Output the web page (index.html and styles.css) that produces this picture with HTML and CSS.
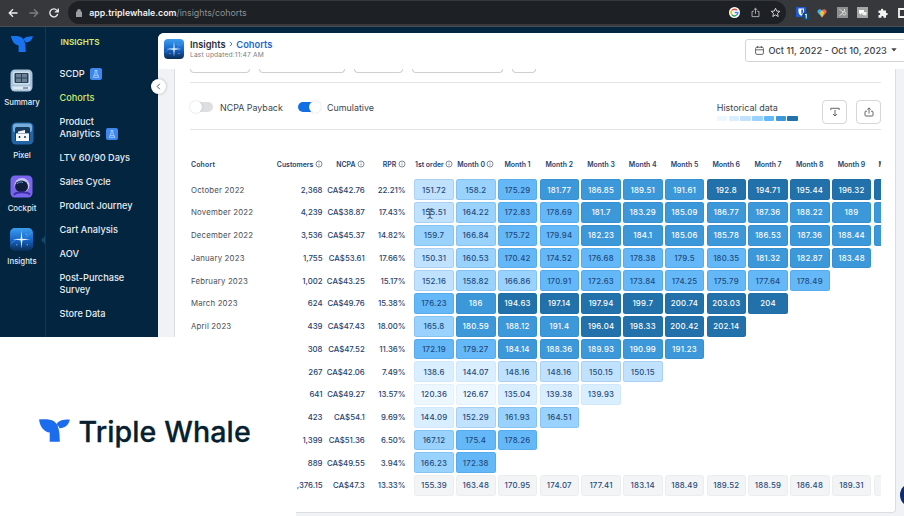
FILE: index.html
```html
<!DOCTYPE html>
<html lang="en">
<head>
    <meta charset="UTF-8">
    <meta name="viewport" content="width=device-width, initial-scale=1.0">
    <title>Cohorts - Triple Whale</title>
    <link rel="stylesheet" href="styles.css">
</head>
<body>
    <!-- shared symbols -->
    <svg class="symbols">
        <symbol id="whale" viewBox="0 0 31 23">
            <path d="M0 .4C6 0 11.500 0 15 2.200C19.500 5.500 20.800 12 20.800 22.700H10.700V13.500C5 13 1 7.500 0 .4Z"/>
            <path d="M17.200 5.600C19.500 1.300 24 .4 30.800 .5C30 5.500 26 9.300 20.600 9.200C19.800 7.500 18.800 6.500 17.200 5.600Z"/>
        </symbol>
        <symbol id="flask" viewBox="0 0 12 12">
            <rect width="12" height="12" rx="2" fill="#3f86ee"/>
            <path d="M4.700 2.500H7.300M5.200 2.500V5L3.200 9.300H8.800L6.800 5V2.500M4.300 7.300H7.700" fill="none" stroke="#b9dcff" stroke-width=".8"/>
        </symbol>
        <symbol id="info" viewBox="0 0 8 8">
            <circle cx="4" cy="4" r="3" fill="none" stroke="#4d5d72" stroke-width=".7"/>
            <path d="M4 3.700V5.500M4 2.300V2.900" stroke="#4d5d72" stroke-width=".7"/>
        </symbol>
        <symbol id="share" viewBox="0 0 12 12">
            <path d="M4 4.800H2.200V10.500H9.800V4.800H8M6 7.500V1.500M4 3.300L6 1.400L8 3.300" fill="none" stroke="currentColor" stroke-width="1" stroke-linejoin="round"/>
        </symbol>
        <symbol id="spark" viewBox="0 0 22 22">
            <linearGradient id="sparkBg" x2="0" y2="1">
                <stop offset="0" stop-color="#3d9dee"/>
                <stop offset=".5" stop-color="#1867cc"/>
                <stop offset="1" stop-color="#0a2c55"/>
            </linearGradient>
            <rect width="22" height="22" rx="4.500" fill="url(#sparkBg)"/>
            <path d="M1 15L7 10L11 13L21 4" fill="none" stroke="#58b4fa" stroke-width=".7" opacity=".6"/>
            <path d="M11 2.500L11.800 10.200L19.500 11L11.800 11.800L11 19.500L10.200 11.800L2.500 11L10.200 10.200Z" fill="#e4f5ff"/>
            <path d="M6 16h1M16 16h1M15 6h1" stroke="#8fd0ff"/>
        </symbol>
    </svg>

    <!-- browser toolbar -->
    <div class="browser">
        <div class="nav-icons">
            <svg width="10" height="10" viewBox="0 0 10 10"><path d="M9.500 5H1.500M5 1.200L1.200 5L5 8.800" stroke="#eee"/></svg>
            <svg width="10" height="10" viewBox="0 0 10 10"><path d="M.5 5H8.500M5 1.200L8.800 5L5 8.800" stroke="#7d7f82"/></svg>
            <svg width="10" height="10" viewBox="0 0 10 10"><path d="M8.700 6A4 4 0 1 1 7.900 2.300L9 3.600M9.300 .5V3.900H5.800" stroke="#eee"/></svg>
        </div>
        <div class="address">
            <svg class="lock" width="6" height="8" viewBox="0 0 6 8"><path d="M0 3H6V8H0ZM1.300 3V2A1.700 1.700 0 0 1 4.700 2V3" fill="#9a9da1" stroke="#9a9da1" stroke-width=".6"/></svg>
            <span class="url"><b>app.triplewhale.com</b>/insights/cohorts</span>
            <svg width="11" height="11" viewBox="0 0 11 11"><circle cx="5.500" cy="5.500" r="5.500" fill="#fff"/><g fill="none" stroke-width="1.500"><path d="M3 3.300A3.300 3.300 0 0 1 7.800 3.100" stroke="#ea4335"/><path d="M3 3.300A3.300 3.300 0 0 0 3 7.700" stroke="#fbbc05"/><path d="M3 7.700A3.300 3.300 0 0 0 7.500 8.200" stroke="#34a853"/><path d="M7.500 8.200A3.300 3.300 0 0 0 8.800 5.500H5.600" stroke="#4285f4"/></g></svg>
            <svg class="grey" width="11" height="11"><use href="#share"/></svg>
            <svg width="11" height="11" viewBox="0 0 11 11"><path d="M5.500 1.200L6.700 4.100L9.900 4.300L7.500 6.400L8.200 9.600L5.500 7.900L2.800 9.600L3.500 6.400L1.100 4.300L4.300 4.100Z" fill="none" stroke="#d0d1d3"/></svg>
        </div>
        <div class="extensions">
            <svg width="14" height="14" viewBox="0 0 14 14"><rect x="0" y="1" width="10" height="10" rx="1" fill="#1c5be0"/><path d="M2.500 2.500H8V6C8 8 6 9.200 5.200 9.700C4.300 9.200 2.500 8 2.500 6Z" fill="#fff"/><path d="M5.300 3.500H7V6C7 7 6 7.900 5.300 8.400Z" fill="#1c5be0"/><rect x="6.500" y="6.500" width="7" height="7.500" rx="1.500" fill="#124a72"/><path d="M9 9L10.200 8V12.500" fill="none" stroke="#fff"/></svg>
            <svg width="10" height="10" viewBox="0 0 10 10"><path d="M5 9.500L.8 4.800C-.7 2 3 -.3 5 2.300Z" fill="#33b6e8"/><path d="M5 9.500L9.200 4.800C10.700 2 7 -.3 5 2.300Z" fill="#f0695a"/><path d="M5 9.500L2.800 4.500L5 2.500L7.200 4.500Z" fill="#f5c531"/></svg>
            <svg width="11" height="11" viewBox="0 0 11 11"><rect width="11" height="11" fill="#8f8f8f"/><path d="M2.500 2L4 3.500L7 5.500M2.500 8.500L5.500 6.500M7.500 2V4.500" stroke="#ddd" fill="none"/><circle cx="7.300" cy="6.300" r="1.700" fill="none" stroke="#ddd"/></svg>
            <svg width="11" height="11" viewBox="0 0 11 11"><rect width="11" height="11" fill="#a6a6a6"/><path d="M2 3H7V6.500H4L3 8V6.500H2Z" fill="#fff"/><path d="M5.500 5H9.500V8H8.500V9L7.300 8H5.500Z" fill="#eee"/></svg>
            <svg width="10" height="10" viewBox="0 0 10 10"><path d="M.5 2.500H3C2.500 0 5.700 0 5.200 2.500H8V5C10.400 4.500 10.400 7.700 8 7.200V9.700H5.500C6 7.500 3 7.500 3.400 9.700H.5V7C2.800 7.400 2.800 4.700 .5 5Z" fill="#f2f2f2"/></svg>
            <svg width="10" height="10" viewBox="0 0 10 10"><path d="M1 1H10V9H1Z" fill="none" stroke="#f2f2f2" stroke-width="1.800"/></svg>
        </div>
    </div>

    <div class="app">
        <!-- icon rail -->
        <div class="rail">
            <svg class="rail-logo" width="22" height="18" preserveAspectRatio="none"><use href="#whale"/></svg>
            <div class="rail-item">
                <svg width="23" height="23" viewBox="0 0 23 23"><rect x=".5" y=".5" width="22" height="22" rx="4.500" fill="#a9c5dc"/><rect x="3" y="2.500" width="17" height="13" rx="2" fill="#d3e0ea"/><rect x="4.500" y="4" width="14" height="10" rx="1" fill="#24445e"/><path d="M6 5H11V8.500H6ZM12 5H17V8.500H12ZM6 9.500H11V13H6ZM12 9.500H17V13H12Z" fill="#6c8294"/><rect x="2.500" y="17.500" width="18" height="3" fill="#dfe9f1"/><path d="M13 19H18" stroke="#33536e"/></svg>
                <span>Summary</span>
            </div>
            <div class="rail-item">
                <svg width="23" height="23" viewBox="0 0 23 23"><rect x=".5" y=".5" width="22" height="22" rx="4.500" fill="#2465a5"/><rect x="2" y="1.500" width="19" height="9" rx="3" fill="#75aedb"/><rect x="4" y="5" width="15" height="14" rx="1.500" fill="#16395d"/><path d="M7 9.500L14 8V11H18V19H5V11H7Z" fill="#f4f8fb"/><path d="M5 11.500H18" stroke="#9db4c8"/><path d="M8.500 14V16M14 14V16" stroke="#26384a" stroke-width="1.500"/></svg>
                <span>Pixel</span>
            </div>
            <div class="rail-item">
                <svg width="23" height="23" viewBox="0 0 23 23"><rect x=".5" y=".5" width="22" height="22" rx="4.500" fill="#7a65ee"/><circle cx="12" cy="10.500" r="7.500" fill="#c9c6f2"/><ellipse cx="11.500" cy="11.500" rx="6.500" ry="6" fill="#111f3d"/><path d="M7 9C8.500 7 11 6.500 13 7.500" stroke="#62a0dc" fill="none"/><path d="M4 20C6 16.500 17 16.500 20 19.500" stroke="#3d2fa5" stroke-width="2" fill="none"/></svg>
                <span>Cockpit</span>
            </div>
            <div class="rail-item active">
                <svg width="23" height="23"><use href="#spark"/></svg>
                <span>Insights</span>
            </div>
        </div>

        <!-- insights menu -->
        <div class="menu">
            <div class="menu-title">INSIGHTS</div>
            <a>SCDP <svg class="flask"><use href="#flask"/></svg></a>
            <a class="current">Cohorts</a>
            <a>Product<br>Analytics <svg class="flask"><use href="#flask"/></svg></a>
            <a>LTV 60/90 Days</a>
            <a>Sales Cycle</a>
            <a>Product Journey</a>
            <a>Cart Analysis</a>
            <a>AOV</a>
            <a>Post-Purchase<br>Survey</a>
            <a>Store Data</a>
        </div>

        <div class="main">
            <div class="topbar">
                <svg width="20" height="20"><use href="#spark"/></svg>
                <div class="crumbs">
                    <div class="path">Insights <svg width="4" height="6" viewBox="0 0 4 6"><path d="M.8 .8L3 3L.8 5.200" fill="none" stroke="#2672d8" stroke-width=".9"/></svg> <span>Cohorts</span></div>
                    <div class="updated">Last updated:11:47 AM</div>
                </div>
                <div class="date">
                    <svg width="9" height="9" viewBox="0 0 9 9"><rect x=".6" y="1.200" width="7.800" height="7.200" rx="1.300" fill="none" stroke="#555" stroke-width=".9"/><path d="M.6 3.800H8.400M2.600 0V2M6.400 0V2" stroke="#555" stroke-width=".9"/></svg>
                    <span>Oct 11, 2022 - Oct 10, 2023</span>
                    <svg width="6" height="4" viewBox="0 0 6 4"><path d="M.3 .2H5.700L3 3.600Z" fill="#444"/></svg>
                </div>
            </div>

            <div class="card">
                <div class="filters"><i></i><i></i><i></i><i></i><i></i></div>
                <div class="controls">
                    <span class="toggle"></span><span class="toggle-label">NCPA Payback</span>
                    <span class="toggle on"></span><span class="toggle-label">Cumulative</span>
                    <div class="history">
                        Historical data
                        <div class="scale"><i class="l1"></i><i class="l2"></i><i class="l3"></i><i class="l4"></i><i class="l5"></i><i class="l6"></i><i class="l7"></i></div>
                    </div>
                    <div class="btn"><svg width="10" height="10" viewBox="0 0 10 10"><path d="M.8 3V1.300H9.200V3M5 3V9M3 7L5 9L7 7" fill="none" stroke="#555" stroke-width=".9"/></svg></div>
                    <div class="btn"><svg width="10" height="10" viewBox="0 0 10 10"><path d="M3 4.200H1.800Q1 4.200 1 5V8.200Q1 9 1.800 9H8.200Q9 9 9 8.200V5Q9 4.200 8.200 4.200H7M5 6.500V1M3.300 2.500L5 .9L6.700 2.500" fill="none" stroke="#555" stroke-width=".9"/></svg></div>
                </div>
                <div class="table" id="table">
                    <div class="row head">
                        <span class="cohort">Cohort</span>
                        <span class="num">Customers <svg><use href="#info"/></svg></span>
                        <span class="num">NCPA <svg><use href="#info"/></svg></span>
                        <span class="num rpr">RPR <svg><use href="#info"/></svg></span>
                        <span class="mid">1st order <svg><use href="#info"/></svg></span>
                        <span class="mid">Month 0 <svg><use href="#info"/></svg></span>
                        <span class="mid">Month 1</span>
                        <span class="mid">Month 2</span>
                        <span class="mid">Month 3</span>
                        <span class="mid">Month 4</span>
                        <span class="mid">Month 5</span>
                        <span class="mid">Month 6</span>
                        <span class="mid">Month 7</span>
                        <span class="mid">Month 8</span>
                        <span class="mid">Month 9</span>
                        <span class="mid last">M</span>
                    </div>
                </div>
            </div>
        </div>
    </div>

    <div class="collapse"><svg width="5" height="7" viewBox="0 0 5 7"><path d="M3.800 .8L1.200 3.500L3.800 6.200" fill="none" stroke="#555"/></svg></div>
    <div class="chat"></div>
    <svg class="cursor" width="6" height="11" viewBox="0 0 6 11"><path d="M.5 .6Q3 .6 3 2Q3 .6 5.500 .6M3 2V9M.5 10.400Q3 10.400 3 9Q3 10.400 5.500 10.400M1.800 6.500H4.200" fill="none" stroke="#33475c" stroke-width=".9"/></svg>

    <!-- logo panel -->
    <div class="brand">
        <svg width="31" height="23"><use href="#whale"/></svg>
        <span>Triple Whale</span>
    </div>

    <script>
        // cohort | customers | ncpa | rpr | values by month
        const rows = [
            ['October 2022', '2,368', 'CA$42.76', '22.21%', [151.72, 158.2, 175.29, 181.77, 186.85, 189.51, 191.61, 192.8, 194.71, 195.44, 196.32], 7],
            ['November 2022', '4,239', 'CA$38.87', '17.43%', [155.51, 164.22, 172.83, 178.69, 181.7, 183.29, 185.09, 186.77, 187.36, 188.22, 189], 6],
            ['December 2022', '3,536', 'CA$45.37', '14.82%', [159.7, 166.84, 175.72, 179.94, 182.23, 184.1, 185.06, 185.78, 186.53, 187.36, 188.44], 6],
            ['January 2023', '1,755', 'CA$53.61', '17.66%', [150.31, 160.53, 170.42, 174.52, 176.68, 178.38, 179.5, 180.35, 181.32, 182.87, 183.48]],
            ['February 2023', '1,002', 'CA$43.25', '15.17%', [152.16, 158.82, 166.86, 170.91, 172.63, 173.84, 174.25, 175.79, 177.64, 178.49]],
            ['March 2023', '624', 'CA$49.76', '15.38%', [176.23, 186, 194.63, 197.14, 197.94, 199.7, 200.74, 203.03, 204]],
            ['April 2023', '439', 'CA$47.43', '18.00%', [165.8, 180.59, 188.12, 191.4, 196.04, 198.33, 200.42, 202.14]],
            ['', '308', 'CA$47.52', '11.36%', [172.19, 179.27, 184.14, 188.36, 189.93, 190.99, 191.23]],
            ['', '267', 'CA$42.06', '7.49%', [138.6, 144.07, 148.16, 148.16, 150.15, 150.15]],
            ['', '641', 'CA$49.27', '13.57%', [120.36, 126.67, 135.04, 139.38, 139.93]],
            ['', '423', 'CA$54.1', '9.69%', [144.09, 152.29, 161.93, 164.51]],
            ['', '1,399', 'CA$51.36', '6.50%', [167.12, 175.4, 178.26]],
            ['', '889', 'CA$49.55', '3.94%', [166.23, 172.38]],
            ['', ',376.15', 'CA$47.3', '13.33%', [155.39, 163.48, 170.95, 174.07, 177.41, 183.14, 188.49, 189.52, 188.59, 186.48, 189.31], 0]
        ];
        const steps = [132, 144.3, 156.5, 168.5, 180.5, 192.2];

        function level(v) {
            return 1 + steps.filter(s => v > s).length;
        }

        const table = document.getElementById('table');
        rows.forEach(([cohort, customers, ncpa, rpr, values, next], i) => {
            const total = i === rows.length - 1;
            let html = `<span class="cohort">${cohort}</span><span class="num">${customers}</span>` +
                `<span class="num">${ncpa}</span><span class="num rpr">${rpr}</span>`;
            values.forEach(v => {
                html += `<span class="cell l${total ? 0 : level(v)}">${v}</span>`;
            });
            // next month is cut off at the card edge
            if (next !== undefined) html += `<span class="cell l${next}"></span>`;
            const row = document.createElement('div');
            row.className = 'row';
            row.innerHTML = html;
            table.appendChild(row);
        });
    </script>
</body>
</html>
```

FILE: styles.css
```css
* {
    box-sizing: border-box;
}

body {
    margin: 0;
    width: 904px;
    height: 516px;
    overflow: hidden;
    position: relative;
    display: flex;
    flex-direction: column;
    font-family: Inter, "Liberation Sans", sans-serif;
    background: #03253f;
}

svg { flex-shrink: 0; }
.symbols { position: absolute; width: 0; height: 0; }

/* browser */
.browser {
    height: 27px;
    flex-shrink: 0;
    display: flex;
    align-items: flex-start;
    background: #36383b;
    border-bottom: 1px solid #4a4c50;
    overflow: hidden;
}

.nav-icons {
    width: 68px;
    flex-shrink: 0;
    height: 25px;
    padding-left: 8px;
    display: flex;
    align-items: center;
    gap: 10.5px;
}
.nav-icons path { fill: none; stroke-width: 1.3; }

.address {
    width: 718px;
    flex-shrink: 0;
    height: 23px;
    margin-top: 1px;
    padding: 0 5px 0 8px;
    display: flex;
    align-items: center;
    gap: 9.3px;
    border-radius: 12px;
    background: #1d2024;
}
.url {
    flex: 1;
    margin-left: -2px;
    font-size: 8.8px;
    color: #8f9296;
}
.url b { color: #f0f0f0; font-weight: 600; }
.grey { color: #b5b6b8; }

.extensions {
    height: 25px;
    margin-left: 10px;
    display: flex;
    align-items: center;
    gap: 9.8px;
}
.extensions svg:first-child { margin-right: -3px; }

.app {
    flex: 1;
    min-height: 0;
    display: flex;
}

/* rail */
.rail {
    width: 46px;
    flex-shrink: 0;
    padding: 8px 1px 0 0;
    display: flex;
    flex-direction: column;
    align-items: center;
    border-right: 1px solid #0e3a55;
    color: #e8eef4;
}
.rail-logo { fill: #1a73ee; margin-bottom: 16px; }
.rail-item {
    height: 53px;
    flex-shrink: 0;
    display: flex;
    flex-direction: column;
    align-items: center;
    gap: 5px;
    font-size: 7.8px;
    line-height: 10px;
    font-weight: 500;
}
.active { position: relative; }
.active::after {
    content: "";
    position: absolute;
    right: -8px;
    top: 8px;
    border: 4px solid transparent;
    border-left: 0;
    border-right-color: #0f4a6e;
}

/* menu */
.menu {
    width: 112px;
    flex-shrink: 0;
    padding: 10px 0 0 13.5px;
    display: flex;
    flex-direction: column;
    gap: 12.1px;
    font-size: 9.2px;
    line-height: 11.9px;
    font-weight: 500;
    color: #e6edf3;
}
.menu-title {
    margin-bottom: 7px;
    padding-left: 1px;
    font-size: 8.2px;
    font-weight: 600;
    color: #d3ee6e;
}
.current { color: #cdea71; }
.flask {
    width: 12px;
    height: 12px;
    margin: -2px 0 -2px 3px;
    vertical-align: -1px;
}

/* main */
.main {
    flex: 1;
    min-width: 0;
    margin-top: 6px;
    display: flex;
    flex-direction: column;
    background: #f1f2f6;
    border-top-left-radius: 6px;
    overflow: hidden;
}

.topbar {
    height: 35.5px;
    flex-shrink: 0;
    padding: 0 0 1px 6px;
    display: flex;
    align-items: center;
    background: #fff;
}
.topbar > svg { margin-bottom: 2px; }
.crumbs { flex: 1; margin: -2px 0 0 6px; }
.path {
    font-size: 9.3px;
    line-height: 11.5px;
    font-weight: 600;
    color: #2c2f36;
}
.path svg { margin: 0 1px 1px; }
.path span { color: #2268cc; }
.updated {
    font-size: 6.7px;
    line-height: 9px;
    letter-spacing: .02em;
    color: #7b7f86;
}
.date {
    width: 160px;
    height: 23px;
    margin-right: -1px;
    padding-left: 9px;
    display: flex;
    align-items: center;
    gap: 4.5px;
    border: 1px solid #d4d4d6;
    border-radius: 3px 0 0 3px;
    font-size: 9.2px;
    font-weight: 500;
    color: #3e4147;
    white-space: nowrap;
}

.card {
    width: 722px;
    height: 444.5px;
    margin-left: 16px;
    padding: 0 14px 0 15px;
    background: #fff;
    border: 1px solid #dcdde3;
    border-top: 0;
    border-radius: 0 0 4px 4px;
}

.filters {
    height: 14.5px;
    display: flex;
    border-bottom: 1px solid #e4e4e0;
}
.filters i {
    height: 4.5px;
    width: 60px;
    margin-right: 9px;
    border: 1px solid #cfcfd2;
    border-top: 0;
    border-radius: 0 0 4px 4px;
}
.filters i:nth-child(2) { width: 86px; }
.filters i:nth-child(3) { width: 49px; }
.filters i:nth-child(4) { width: 91px; }
.filters i:nth-child(5) { width: 24px; }

.controls {
    height: 47px;
    padding-top: 2px;
    display: flex;
    align-items: center;
    border-bottom: 1px solid #e4e4e0;
    font-size: 9px;
    color: #3d434c;
    white-space: nowrap;
}
.toggle {
    width: 24px;
    height: 12px;
    display: flex;
    align-items: center;
}
.toggle::before {
    content: "";
    width: 12px;
    height: 12px;
    flex-shrink: 0;
    background: #fff;
    border-radius: 50%;
    box-shadow: 0 0 2px rgba(0,0,0,0.2);
    z-index: 1;
}
.toggle::after {
    content: "";
    width: 18px;
    height: 10px;
    margin-left: -7px;
    background: #dddee1;
    border-radius: 5px;
}
.toggle.on { flex-direction: row-reverse; margin-left: 15px; }
.toggle.on::after { margin: 0 -7px 0 0; background: #1270e4; }
.toggle-label { margin-left: 6px; font-size: 8.9px; }
.toggle-label:nth-child(2) { width: 62px; }

.history {
    margin-left: auto;
    margin-right: 24px;
    padding-top: 8px;
    line-height: 11px;
}
.scale { display: flex; gap: 1.2px; margin-top: 3px; }
.scale i { width: 10.6px; height: 5px; border-radius: 1px; }
.btn {
    width: 25px;
    height: 24px;
    margin: 15px 0 0;
    align-self: flex-start;
    display: flex;
    align-items: center;
    justify-content: center;
    border: 1px solid #d6d6d9;
    border-radius: 4px;
}
.btn + .btn { margin-left: 9px; }

/* cohort table */
.table {
    height: 370px;
    padding-left: 1px;
    overflow: hidden;
}
.row {
    width: 800px;
    height: 20.75px;
    margin-bottom: 2px;
    display: grid;
    grid-template-columns: 79.75px 49.5px 40px 45px repeat(12, 39.5px);
    column-gap: 2.25px;
    align-items: center;
    font-size: 7.8px;
    color: #26426e;
    white-space: nowrap;
}
.head {
    height: 14px;
    margin: 27px 0 8.3px;
    font-size: 6.9px;
    font-weight: 600;
}
.head svg {
    width: 8px;
    height: 8px;
    margin-left: -.5px;
    vertical-align: -1.6px;
}
.cohort { color: #4a4e56; letter-spacing: .025em; }
.head .cohort { color: #26426e; }
.num { text-align: right; font-weight: 500; }
.head .num { font-weight: 600; }
.rpr { padding-right: 6.5px; }
.mid { text-align: center; }
.last { text-align: left; padding-left: 5px; }

.cell {
    height: 20.75px;
    display: flex;
    align-items: center;
    justify-content: center;
    border: 1px solid rgba(20, 90, 160, 0.12);
    border-radius: 2.5px;
    font-weight: 500;
    letter-spacing: .03em;
    color: #1f4a7c;
}
.l0 { background: #f3f4f6; }
.cell.l0 { border-color: #eceded; }
.l1 { background: #edf7ff; }
.l2 { background: #d9eeff; }
.l3 { background: #c0e2ff; }
.l4 { background: #98d2fd; }
.l5 { background: #64b8f8; }
.l6 { background: #3d98d9; }
.l7 { background: #2271aa; }
.cell.l1, .cell.l2 { border-color: rgba(20, 90, 160, 0.04); }
.cell.l6, .cell.l7 { color: #fff; }

/* floating parts */
.collapse {
    position: absolute;
    left: 151px;
    top: 79px;
    width: 15px;
    height: 15px;
    display: flex;
    align-items: center;
    justify-content: center;
    background: #fff;
    border-radius: 50%;
    box-shadow: 0 0 3px rgba(0,0,0,0.3);
}
.chat {
    position: absolute;
    left: 900px;
    top: 483px;
    width: 24px;
    height: 24px;
    border-radius: 50%;
    background: #0b2c72;
}
.cursor {
    position: absolute;
    left: 427px;
    top: 208px;
}

.brand {
    position: absolute;
    left: 0;
    bottom: 0;
    width: 296px;
    height: 179px;
    padding: 9px 0 0 38.5px;
    display: flex;
    align-items: center;
    background: #fff;
    font-size: 28.6px;
    font-weight: 500;
    letter-spacing: .1px;
    color: #06202f;
}
.brand svg { fill: #1c6cf0; margin: 0 9px 1px 0; }
.brand span { -webkit-text-stroke: .3px #06202f; }
```
